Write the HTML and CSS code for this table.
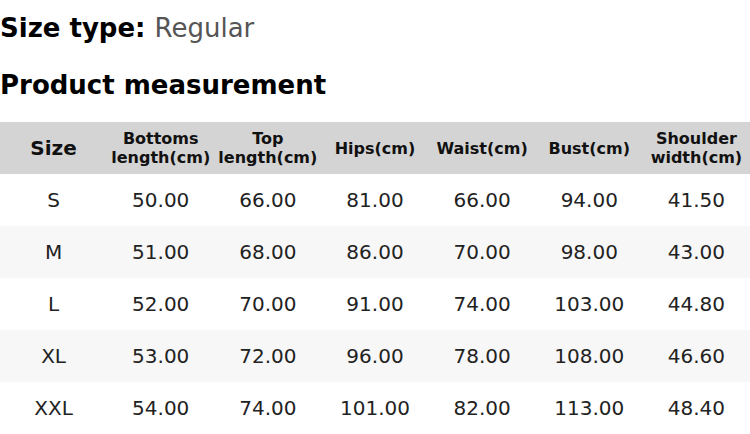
FILE: index.html
```html
<!DOCTYPE html>
<html>
<head>
<meta charset="utf-8">
<link rel="stylesheet" href="styles.css">
</head>
<body>
<div class="page">
  <h2 class="size-type"><span class="label">Size type:</span> <span class="value">Regular</span></h2>
  <h2 class="section-title">Product measurement</h2>
  <table class="chart">
    <thead>
      <tr>
        <th class="size-col">Size</th>
        <th>Bottoms<br>length(cm)</th>
        <th>Top<br>length(cm)</th>
        <th>Hips(cm)</th>
        <th>Waist(cm)</th>
        <th>Bust(cm)</th>
        <th>Shoulder<br>width(cm)</th>
      </tr>
    </thead>
    <tbody>
      <tr><td>S</td><td>50.00</td><td>66.00</td><td>81.00</td><td>66.00</td><td>94.00</td><td>41.50</td></tr>
      <tr><td>M</td><td>51.00</td><td>68.00</td><td>86.00</td><td>70.00</td><td>98.00</td><td>43.00</td></tr>
      <tr><td>L</td><td>52.00</td><td>70.00</td><td>91.00</td><td>74.00</td><td>103.00</td><td>44.80</td></tr>
      <tr><td>XL</td><td>53.00</td><td>72.00</td><td>96.00</td><td>78.00</td><td>108.00</td><td>46.60</td></tr>
      <tr><td>XXL</td><td>54.00</td><td>74.00</td><td>101.00</td><td>82.00</td><td>113.00</td><td>48.40</td></tr>
    </tbody>
  </table>
</div>
</body>
</html>
```
FILE: styles.css
```css
html, body {
  margin: 0;
  padding: 0;
  background: #ffffff;
}
body {
  font-family: "DejaVu Sans", sans-serif;
  color: #111;
}
.page {
  width: 750px;
}
.size-type {
  margin: 13px 0 0 0;
  font-size: 26px;
  line-height: 30px;
  font-weight: bold;
  color: #000;
}
.size-type .value {
  font-weight: normal;
  color: #555;
}
.section-title {
  margin: 27px 0 0 0;
  font-size: 26px;
  line-height: 30px;
  font-weight: bold;
  color: #000;
}
.chart {
  margin-top: 22px;
  width: 750px;
  border-collapse: collapse;
  table-layout: fixed;
}
.chart th {
  background: #d4d4d4;
  height: 52px;
  padding: 0;
  font-size: 16px;
  line-height: 19px;
  font-weight: bold;
  color: #111;
  text-align: center;
  vertical-align: middle;
}
.chart th.size-col {
  font-size: 20px;
}
.chart td {
  height: 52px;
  padding: 0;
  font-size: 20px;
  color: #222;
  text-align: center;
  vertical-align: middle;
}
.chart tbody tr:nth-child(even) td {
  background: #f7f7f7;
}
```
